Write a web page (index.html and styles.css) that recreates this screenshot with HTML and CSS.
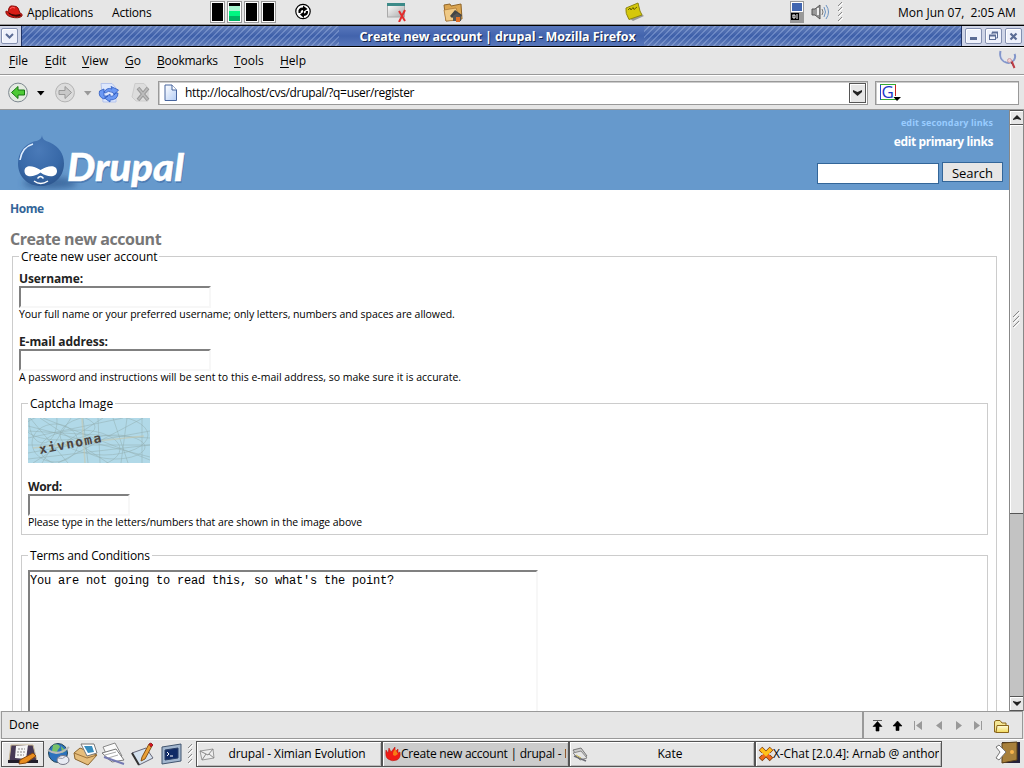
FILE: index.html
```html
<!DOCTYPE html>
<html lang="en">
<head>
<meta charset="utf-8">
<title>Create new account | drupal</title>
<link rel="stylesheet" href="styles.css">
</head>
<body>
<svg class="defs" width="0" height="0" aria-hidden="true">
  <defs>
    <pattern id="grip" width="5" height="5" patternUnits="userSpaceOnUse"><path d="M0 4L4 0" stroke="#888"/><path d="M1 5L5 1" stroke="#fff"/></pattern>
    <radialGradient id="drop" cx=".45" cy=".3" r=".8"><stop offset="0" stop-color="#4a7ab8"/><stop offset=".6" stop-color="#3869a8"/><stop offset="1" stop-color="#2b5288"/></radialGradient>
    <linearGradient id="gold" x2="0" y2="1"><stop offset="0" stop-color="#fffce0"/><stop offset="1" stop-color="#f3d956"/></linearGradient>
    <linearGradient id="silver" x2="1" y2="1"><stop offset="0" stop-color="#fff"/><stop offset="1" stop-color="#aaa"/></linearGradient>
    <linearGradient id="paper" x2="1" y2="1"><stop offset="0" stop-color="#fff"/><stop offset="1" stop-color="#b4cdf5"/></linearGradient>
    <filter id="soft" x="-50%" y="-50%" width="200%" height="200%"><feGaussianBlur stdDeviation="3"/></filter>
  </defs>
</svg>
<div class="desktop">
  <header class="panel">
    <svg class="hat" width="18" height="14" viewBox="0 0 18 14"><path d="M1 6Q0 10 6 12Q14 14 17 11Q18 9 15 8L13 3Q12 1 8 1Q5 0 4 3L3 7Z" fill="#d91c16" stroke="#8d120e"/><path d="M3 7Q8 11 15 9L16 11Q9 13 4 9Z" fill="#3a0806"/><path d="M5 4Q7 1 10 3" stroke="#f66" fill="none"/></svg>
    <span class="ls-apps">Applications</span>
    <span class="ls-apps">Actions</span>
    <div class="meters"><i></i><i class="busy"></i><i></i><i></i></div>
    <svg width="18" height="18" viewBox="0 0 18 18"><circle cx="8" cy="8.500" r="7.200" fill="#fff" stroke="#000" stroke-width="1.200"/><path d="M3.500 10Q2.500 4.500 8 4.500V2.500L12.500 6L8 9V7Q5.500 7 5.500 10ZM13 8Q13.500 12.500 9 13V15L5 11.500L9 8.500V10.500Q11 10.500 11 8Z"/></svg>
    <svg width="20" height="20" viewBox="0 0 20 20"><rect x=".5" y="2" width="17" height="13" fill="url(#silver)" stroke="#aaa"/><path d="M0 2.500H18" stroke="#3c8a88" stroke-width="3"/><path d="M12 9L18 19M18 8L12 20" stroke="#e22c2c" stroke-width="2"/></svg>
    <svg width="20" height="22" viewBox="0 0 20 22"><path d="M1 4L7 3L8 5L18 3L19 18L3 20Z" fill="#dba550" stroke="#8f6529"/><path d="M1 9L13 7L17 19L3 20Z" fill="#f0ca86" stroke="#a87432" stroke-width=".7"/><path d="M7 15L12 9L19 14L18 16L14 13L9 17Z" fill="#444"/><path d="M10 15L14 12L18 15V20H10Z" fill="#555"/><rect x="13" y="16" width="4" height="5" fill="#e07028"/></svg>
    <svg width="20" height="20" viewBox="0 0 20 20"><path d="M4 16L15 11L19 14L8 19Z" fill="#999"/><path d="M1 6L13 1L15 9L17 13L4 17.500Q0 11 1 6Z" fill="#d5c80c" stroke="#8e8612"/><path d="M3 8L5 6L6 8L8 5.500L9 7.500L12 5" stroke="#665f00" fill="none"/></svg>
    <svg width="14" height="22" viewBox="0 0 14 22"><rect width="14" height="22" fill="#999"/><rect x="1.500" y="1.500" width="11" height="9" fill="#4166b0" stroke="#fff"/><rect x="1" y="12" width="8" height="7"/><path d="M2.500 14H5V17H3V14M7 13V18" stroke="#fff" fill="none"/></svg>
    <svg width="19" height="18" viewBox="0 0 19 18"><path d="M1 6H4L9 2V16L4 12H1Z" fill="#999" stroke="#555"/><path d="M7 5V12" stroke="#eee" stroke-width="2"/><path d="M11 6Q13 9 11 12" stroke="#777" fill="none"/><path d="M13 4Q16 9 13 14M15 2Q20 9 15 16" stroke="#6a92c2" fill="none"/></svg>
    <svg class="grip-top" width="5" height="20"><rect width="5" height="20" fill="url(#grip)"/></svg>
    <span class="ls-clock">Mon Jun 07,&nbsp; 2:05 AM</span>
  </header>

  <div class="titlebar">
    <div class="tb-left"><b class="winbtn"><svg width="15" height="15" viewBox="0 0 15 15"><path d="M4 5L7.500 8.500L11 5" fill="none" stroke="#5b6c95" stroke-width="2"/></svg></b></div>
    <div class="tb-title"><span>Create new account | drupal - Mozilla Firefox</span></div>
    <div class="tb-right">
      <b class="winbtn"><svg width="15" height="15" viewBox="0 0 15 15"><path d="M4 9.500H11" stroke="#5b6c95" stroke-width="3"/></svg></b>
      <b class="winbtn"><svg width="15" height="15" viewBox="0 0 15 15"><path d="M6 5V3.500H11.500V9H10" fill="none" stroke="#5b6c95"/><rect x="3.500" y="6.500" width="6" height="4" fill="none" stroke="#5b6c95"/><path d="M3 6.500H10M6 3.500H12" stroke="#5b6c95" stroke-width="2"/></svg></b>
      <b class="winbtn"><svg width="15" height="15" viewBox="0 0 15 15"><path d="M4.500 4.500L10.500 10.500M10.500 4.500L4.500 10.500" stroke="#5b6c95" stroke-width="2.200"/></svg></b>
    </div>
  </div>

  <nav class="menubar">
    <span><u>F</u>ile</span><span><u>E</u>dit</span><span><u>V</u>iew</span><span><u>G</u>o</span><span class="ls-book"><u>B</u>ookmarks</span><span><u>T</u>ools</span><span><u>H</u>elp</span>
    <svg class="throbber" width="20" height="20" viewBox="0 0 20 20"><path d="M2.500 1Q1 8 6 11.500Q12 15 16 10Q18 7 16.500 4" fill="none" stroke="#8295ca" stroke-width="2"/><path d="M4 4Q3 9 7 11" stroke="#dce3f3" fill="none"/><path d="M11 10L14 12L16.500 18" stroke="#bd3d46" stroke-width="2"/><circle cx="11.500" cy="10.500" r="2" fill="#f5d0d0" stroke="#c9a0a8"/></svg>
  </nav>

  <div class="toolbar">
    <svg class="nav-icons" width="150" height="26" viewBox="4 79 150 26">
      <circle cx="18" cy="91.500" r="9.400" fill="#e4ebe1" stroke="#7e8790"/><path d="M11.500 91.500L18 85.500V89H24.500V94H18V97.500Z" fill="#4ecb35" stroke="#167512"/>
      <path d="M37 90H44.500L40.750 94.500Z"/>
      <circle cx="65" cy="91.500" r="9.400" fill="#dcdcdc" stroke="#b3b3b3"/><path d="M71.500 91.500L65 85.500V89.500H59V93.500H65V97.500Z" fill="#c8c8c8" stroke="#999"/>
      <path d="M84 90H91.500L87.750 94.500Z" fill="#999"/>
      <path d="M101 82.500H112L116 87V101H103Z" fill="#dde7fd" stroke="#b5c4ec"/><path d="M104 91Q107 86 112 88L111 85.500L118.500 89L114 94L113 91.500Q108 89 105 92ZM118 92Q118 99 110 99V101L104.500 97L110 93V95Q114 96 115 92ZM99.500 90L104 88L104 95L108 95L104 98Q98 96 99.500 90Z" fill="#6c99f3" stroke="#2d5bc0" stroke-width=".8"/>
      <path d="M135 82.500H144L148 87V100H136L132 96Z" fill="#ddd" stroke="#ccc"/><path d="M138 87L148 99M148 87L138 99" stroke="#999" stroke-width="3.600"/><path d="M138.500 87.500L147.500 98.500M147.500 87.500L138.500 98.500" stroke="#bcbcbc" stroke-width="1.800"/>
    </svg>
    <div class="urlbar">
      <svg width="14" height="18" viewBox="0 0 14 18"><path d="M1 1H8L12.500 6V16.500H1Z" fill="url(#paper)" stroke="#47659e"/><path d="M8 1V6H12.500" fill="#fff" stroke="#47659e"/></svg>
      <span class="ls-url">http://localhost/cvs/drupal/?q=user/register</span>
      <b class="drop"><svg width="9" height="6" viewBox="0 0 9 6"><path d="M0 0L4.500 2L9 0V2L4.500 6L0 2Z" fill="#222"/></svg></b>
    </div>
    <div class="searchbar"><svg width="24" height="20" viewBox="0 0 24 20"><rect x="1.500" y="1.500" width="15" height="15" fill="#fff"/><path d="M1 1.500H17M1 16.500H17" stroke="#3a3"/><path d="M1.500 2V17" stroke="#24c"/><path d="M16.500 2V13" stroke="#c22"/><text x="2.500" y="15" class="g">G</text><path d="M14.500 14H22L18 18Z"/></svg></div>
  </div>

  <div class="viewport">
    <main class="page">
      <div class="banner">
        <svg class="logo" width="200" height="80" viewBox="0 110 200 80">
          <ellipse cx="50" cy="183" rx="27" ry="6" fill="#264f85" opacity=".6" filter="url(#soft)"/>
          <path d="M42 135C42.500 140 45 140.500 50 142.500C59 146.500 64 154 64 163.500C64 177 54 186 41 186C28 186 18 177 18 163.500C18 153 24 145 33 141.800C38 140.500 41.500 140 42 135Z" fill="url(#drop)"/>
          <path d="M20 160Q22 147 33 144" fill="none" stroke="#dfeeff" stroke-width="1.600"/>
          <path d="M24.500 171C24.500 164.500 33 165 40.500 170C48 165 57 164.500 57 171C57 177.500 48 178 40.500 172.500C33 178 24.500 177.500 24.500 171Z" fill="#fff"/>
          <path d="M37.500 178.500Q40.500 174.500 43.500 178.500M34 181Q40.500 186 48 181" fill="none" stroke="#fff" stroke-width="1.400"/>
          <text x="68" y="182.500" textLength="117" lengthAdjust="spacingAndGlyphs" class="wordmark shade">Drupal</text>
          <text x="67" y="181" textLength="117" lengthAdjust="spacingAndGlyphs" class="wordmark">Drupal</text>
        </svg>
        <div class="links">
          <a class="secondary">edit secondary links</a>
          <a class="primary">edit primary links</a>
          <div class="find"><i class="find-field"></i><b class="find-btn">Search</b></div>
        </div>
      </div>
      <a class="crumb">Home</a>
      <h1>Create new account</h1>
      <section class="box outer">
        <span class="legend ls-legend">Create new user account</span>
        <div class="item"><label>Username:</label><i class="field"></i><p class="ls-d1">Your full name or your preferred username; only letters, numbers and spaces are allowed.</p></div>
        <div class="item"><label>E-mail address:</label><i class="field"></i><p>A password and instructions will be sent to this e-mail address, so make sure it is accurate.</p></div>
        <section class="box captcha">
          <span class="legend">Captcha Image</span>
          <svg class="captcha-img" width="122" height="45" viewBox="0 0 122 45">
            <rect width="122" height="45" fill="#b1d9e8"/>
            <g fill="none" stroke="#93aeb0" stroke-width=".5">
              <path d="M0 8L122 39M0 35L122 13M12 0L80 45M30 45L115 0M0 20L95 0M2 0L40 45M55 0L60 45M70 0L72 45M85 0L100 45M0 27H122M0 41L122 27M43 0L14 45M93 45L99 0M114 0V45M0 13L122 20M15 0L122 42M5 45L75 0"/>
              <ellipse cx="27" cy="25" rx="23" ry="19"/><ellipse cx="52" cy="31" rx="40" ry="19"/><ellipse cx="76" cy="17" rx="44" ry="20"/><ellipse cx="32" cy="9" rx="35" ry="13"/><ellipse cx="87" cy="29" rx="30" ry="12"/><ellipse cx="15" cy="3" rx="14" ry="22"/>
            </g>
            <path d="M54 0L57 45M5 30L116 18" stroke="#c6c7ae" stroke-width="1.500" opacity=".6"/>
            <text x="12" y="36" transform="rotate(-11 12 36)" textLength="63" class="scribble">xivnoma</text>
          </svg>
          <label class="ls-word">Word:</label><i class="field short"></i><p class="ls-d3">Please type in the letters/numbers that are shown in the image above</p>
        </section>
        <section class="box terms">
          <span class="legend ls-terms">Terms and Conditions</span>
          <div class="textarea">You are not going to read this, so what's the point?</div>
        </section>
      </section>
    </main>
    <aside class="scroll">
      <b class="sbtn"><svg width="8" height="5" viewBox="0 0 8 5"><path d="M4 0L8 4V5L4 4L0 5V4Z" fill="#222"/></svg></b>
      <b class="thumb"><svg width="7" height="17" viewBox="0 0 7 17"><path d="M0 6L6 0M0 11L6 5M0 16L6 10" stroke="#888"/><path d="M1 7L7 1M1 12L7 6M1 17L7 11" stroke="#fff"/></svg></b>
      <b class="sbtn end"><svg width="8" height="5" viewBox="0 0 8 5"><path d="M4 5L8 1V0L4 1L0 0V1Z" fill="#222"/></svg></b>
    </aside>
  </div>

  <div class="status">
    <span>Done</span>
    <svg width="158" height="26" viewBox="864 712 158 26">
      <path d="M873 720.500H882M877.500 721.500L882 726.500H879V731H876V726.500H873ZM897.500 721L902 726H899V730.500H896V726H893Z" stroke="#000" stroke-width=".6"/>
      <g fill="#999"><path d="M914 721H915V730H914ZM922 721V730L916 725.500ZM942 721V730L936 725.500ZM956 721V730L962 725.500ZM974 721V730L980 725.500ZM981 721H982V730H981Z"/></g>
      <path d="M994.500 732V721.500L996 720.500H1000L1002 723H1006V732Z" fill="#f5e796" stroke="#8a6519"/><path d="M997 725.500H1008.500V732.500H996Z" fill="url(#gold)" stroke="#8a6519"/>
    </svg>
  </div>

  <footer class="taskbar">
    <b class="launcher"><svg width="30" height="22" viewBox="0 0 30 22"><path d="M3 2H25L29 18H1Z" fill="#463955" stroke="#c9b894"/><path d="M0 17H30V20H0Z" fill="#211d29"/><path d="M8 3L20 2L18 16L7 15Z" fill="#f6f6f6"/><path d="M10 6H17M9 9H17M9 12H16" stroke="#888" stroke-dasharray="2 1"/><path d="M12 17L25 10L28 13L18 20L11 21Z" fill="#e88d1f" stroke="#89490e"/></svg></b>
    <svg class="launch-icons" width="150" height="26" viewBox="45 741 150 26">
      <circle cx="58" cy="753" r="9.500" fill="#2d72bd" stroke="#245"/><path d="M53 745Q59 743 60 747Q58 749 56 754L52 751ZM61 746L66 751L62 753Z" fill="#78c268"/><path d="M48 750Q58 757 69 747" stroke="#bbb" stroke-width="2" fill="none"/><ellipse cx="63" cy="760" rx="6" ry="4.500" fill="#e8ebf3" stroke="#778"/><path d="M58 758Q63 760 66 756" stroke="#99a" fill="none"/>
      <path d="M74 753L80 748L97 755L88 765L75 759Z" fill="#e5bd7b" stroke="#8b662f"/><path d="M81 744H94L97 753L87 756Z" fill="#fff" stroke="#777"/><path d="M84 746H92L94 752L88 753Z" fill="#378dbf"/><path d="M74 753L87 758L97 755" fill="none" stroke="#9d733b"/>
      <path d="M103 747L115 743L122 756L109 760Z" fill="#fafafa" stroke="#888"/><path d="M102 753L116 749L124 760L112 762Z" fill="#fff" stroke="#777"/><path d="M105 755L116 752M108 758L118 755" stroke="#aaa"/><path d="M104 757L124 764" stroke="#7479b3" stroke-width="2"/>
      <path d="M132 753L146 748L153 758L139 765Z" fill="#d5e2ef" stroke="#667"/><path d="M132 753L139 765" stroke="#333" stroke-width="2"/><path d="M142 757L149 744L152 746L145 759L141 761Z" fill="#e9a138" stroke="#865216"/><path d="M149 744L151 743L153 745L151 747Z" fill="#d12" stroke="#922"/>
      <path d="M162 747L181 744V761L162 764Z" fill="#a2b6ce" stroke="#41556f"/><path d="M165 750L178 748V758L165 760Z" fill="#102b66" stroke="#283e67"/><path d="M167 752L169 754L167 756M170 756H173" stroke="#fff" fill="none"/>
      <path d="M188 748L192 744M188 753L192 749M188 758L192 754M188 763L192 759" stroke="#888"/><path d="M189 749L193 745M189 754L193 750M189 759L193 755M189 764L193 760" stroke="#fff"/>
    </svg>
    <div class="tasks">
      <b class="task"><svg width="16" height="16" viewBox="0 0 16 16"><path d="M1 5L14 3L15 12L3 14Z" fill="#eee" stroke="#999"/><path d="M1 5L9 9L14 3M3 14L7 8M15 12L10 8" stroke="#888" fill="none"/></svg><span class="ls-t1">drupal - Ximian Evolution</span></b>
      <b class="task active"><svg width="16" height="16" viewBox="0 0 16 16"><path d="M1 4L3 7L4 2L6 6L10 1L10 6L13 3L13 7L15 6Q16 12 12 14Q7 16 3 13Q0 11 1 4Z" fill="#f01b16" stroke="#b60f0a" stroke-width=".5"/><path d="M8 9Q8 5 10 3L13 8L10 10Z" fill="#f87b16"/></svg><span class="ls-t2">Create new account | drupal - Mozilla</span></b>
      <b class="task"><svg width="16" height="16" viewBox="0 0 16 16"><path d="M1 4L9 2L15 10L7 13Z" fill="#ccc" stroke="#777"/><path d="M1 7L9 5L15 12L8 14Z" fill="#e4e4e4" stroke="#888"/><path d="M2 10L14 15" stroke="#6c6c75" stroke-width="1.500"/><path d="M4 9L9 12" stroke="#c8b94c"/></svg><span>Kate</span></b>
      <b class="task"><svg width="16" height="16" viewBox="0 0 16 16"><path d="M2.500 2.500L13.500 13.500M13.500 2.500L2.500 13.500" stroke="#7d3c08" stroke-width="5"/><path d="M3 3L13 13M13 3L3 13" stroke="#f16a1d" stroke-width="3.500"/><path d="M3 3L8 8L13 3" stroke="#ffc31b" stroke-width="3.500" fill="none"/><path d="M1 8H5M11 8H15" stroke="#ddd" stroke-width="1.500"/></svg><span class="ls-t4">X-Chat [2.0.4]: Arnab @ anthon</span></b>
    </div>
    <svg class="door" width="26" height="24" viewBox="0 0 26 24"><path d="M7 1H25V22H8Z" fill="#25213a"/><path d="M7 2L22 1V19L7 22Z" fill="#a8803b" stroke="#5a4119"/><circle cx="17" cy="11" r="2" fill="#f7b34b"/><path d="M1 6L4 4L11 11L4 19L1 17L5 11Z" fill="#fff" stroke="#777"/></svg>
  </footer>
</div>
</body>
</html>
```
FILE: styles.css
```css
* { box-sizing: border-box; }
body { margin: 0; font-family: "Open Sans", "Noto Sans", sans-serif; font-size: 12px; line-height: 16px; color: #000; overflow: hidden; }
b { font-weight: normal; }
i { font-style: normal; }
svg { display: block; flex: none; }
.defs { position: absolute; }
.desktop { width: 1024px; height: 768px; display: grid; grid-template-rows: 26px 21px 28px 35px 601px 28px 29px; background: #e6e6e6; white-space: nowrap; overflow: hidden; }

.panel { display: grid; grid-template-columns: 27px 85px 98px 85px 92px 56px 182px 165px 21px 27px 60px 1fr; align-items: center; padding-bottom: 2px; border-bottom: 1px solid #000; box-shadow: inset 0 -1px #999; }
.panel span { padding-top: 2px; }
.hat { margin-left: 5px; }
.ls-apps { letter-spacing: -.2px; }
.ls-clock { letter-spacing: 0; }
.meters { display: flex; gap: 2px; }
.meters i { width: 15px; height: 22px; border: 1px solid #999; outline: 1px solid #fff; outline-offset: -2px; background: #000; }
.meters .busy { background: linear-gradient(#000 4px, #a5f5ce 4px 9px, #00f582 9px 14px, #00b264 14px); }

.titlebar { display: grid; grid-template-columns: 22px 1fr 63px; border-bottom: 1px solid #000; }
.tb-left, .tb-right { display: flex; align-items: center; background: #cfd5e7; }
.tb-left { padding-left: 1px; border-right: 1px solid #223567; }
.tb-right { gap: 3px; padding-left: 3px; border-left: 1px solid #223567; }
.winbtn { width: 17px; height: 16px; border: 1px solid #8490b0; border-radius: 2px; background: #eef1fb; box-shadow: inset 1px 1px #fff; }
.tb-title { display: flex; align-items: center; justify-content: center; background: linear-gradient(rgba(255,255,255,.2), rgba(255,255,255,0) 50%, rgba(255,255,255,.2)), repeating-linear-gradient(135deg, #3d5fa9 0 2px, #6280c0 2px 2.830px, #3d5fa9 2.830px 4.243px); }
.tb-title span { padding: 2px 8px 0 20px; background: linear-gradient(#5877bb, #4263ac 50%, #5877bb); font-weight: 700; font-size: 12.500px; color: #fff; text-shadow: 1px 1px #16274e; letter-spacing: -.1px; line-height: 18px; }

.menubar { display: grid; grid-template-columns: 36px 37px 43px 32px 77px 46px 718px 1fr; align-items: center; padding-left: 9px; border-top: 1px solid #fff; border-bottom: 1px solid #999; }
.menubar u { text-underline-offset: 2px; }
.ls-book { letter-spacing: -.27px; }
.throbber { margin-top: -2px; }

.toolbar { display: flex; align-items: center; padding-left: 4px; border-top: 1px solid #fff; border-bottom: 1px solid #999; }
.urlbar, .searchbar { display: flex; align-items: center; height: 24px; border: 1px solid #999; background: #fff; box-shadow: inset 1px 1px #ccc; }
.urlbar { width: 710px; margin-left: 4px; padding: 0 1px 0 5px; }
.urlbar span { margin-left: 7px; flex: 1; line-height: 20px; letter-spacing: -.34px; }
.drop { display: flex; align-items: center; justify-content: center; width: 17px; height: 20px; border: 1px solid #555; background: #e6e6e6; box-shadow: inset 1px 1px #fff; }
.searchbar { width: 144px; margin-left: 7px; padding-left: 3px; }
.g { font: 17px "Open Sans", sans-serif; fill: #1a35c8; }

.viewport { display: grid; grid-template-columns: 1009px 15px; min-height: 0; overflow: hidden; }
.page { background: #fff; min-width: 0; height: 601px; overflow: hidden; }
.banner { display: flex; justify-content: space-between; height: 80px; background: #69c; }
.wordmark { font: italic 900 37px Lato, sans-serif; fill: #fff; stroke: #fff; stroke-width: .4px; }
.shade { fill: #3c6ba6; stroke: none; opacity: .6; }
.links { display: flex; flex-direction: column; align-items: flex-end; padding: 5px 6px 0 0; font-weight: 700; }
.links a { margin-right: 10px; }
.secondary { color: #9cf; font-size: 9px; letter-spacing: .1px; }
.primary { color: #fff; margin-top: 3px; letter-spacing: -.4px; }
.find { display: flex; gap: 3px; margin-top: 12px; font-weight: 400; }
.find-field { width: 122px; height: 21px; margin-top: 1px; background: #fff; border: 1px solid #369; }
.find-btn { width: 61px; height: 20px; border: 1px solid #369; background: #e6e6e6; font-size: 13px; line-height: 20px; text-align: center; }
.crumb { display: block; margin: 11px 0 0 10px; color: #369; font-weight: 700; letter-spacing: -.45px; }
h1 { margin: 13px 0 0 10px; height: 26px; font-size: 16px; line-height: 18px; color: #777; letter-spacing: -.43px; }
.box { border: 1px solid #ccc; }
.legend { display: block; width: max-content; height: 16px; margin-top: -8px; padding: 0 2px; background: #fff; }
.ls-legend { letter-spacing: -.1px; }
.ls-terms { letter-spacing: -.15px; }
.outer { width: 985px; height: 600px; margin: 0 0 0 12px; padding: 0 8px 0 6px; }
.item { height: 63px; }
.outer > .legend { margin-bottom: 6px; }
label { display: block; height: 15px; color: #222; font-weight: 700; line-height: 16px; letter-spacing: -.1px; }
.ls-word { letter-spacing: -.35px; }
.field { display: block; width: 192px; height: 22px; border: 2px solid; border-color: #808080 #f7f7f7 #f7f7f7 #808080; }
p { margin: -1px 0 0; font-size: 10.500px; line-height: 14px; }
.ls-d1 { letter-spacing: -.06px; }
.ls-d3 { letter-spacing: -.09px; }
.captcha, .terms { width: 967px; margin-left: 2px; padding-left: 6px; }
.captcha { height: 132px; margin-top: 6px; }
.captcha-img { margin: 6px 0 16px; }
.short { width: 102px; }
.terms { height: 300px; margin-top: 20px; }
.textarea { width: 510px; height: 250px; margin-top: 6px; padding-top: 1px; border: 2px solid; border-color: #808080 #f7f7f7 #f7f7f7 #808080; font: 12px/16px "Liberation Mono", monospace; letter-spacing: -.2px; }
.scribble { font: bold 13px "DejaVu Sans Mono", monospace; fill: #4b4440; }

.scroll { display: flex; flex-direction: column; background: #c3c3c3; border-left: 1px solid #888; border-right: 1px solid #888; }
.sbtn, .thumb { display: flex; align-items: center; justify-content: center; background: #e6e6e6; border: 1px solid #555; border-width: 1px 0; box-shadow: inset 1px 1px #fff; }
.sbtn { height: 15px; }
.thumb { height: 389px; border-top: 0; }
.end { margin-top: auto; }

.status { display: grid; grid-template-columns: 862px 1fr; margin: 0 1px; border: 1px solid #999; align-items: center; }
.status span { padding-left: 7px; border-right: 2px solid #999; line-height: 26px; }

.taskbar { display: flex; align-items: stretch; padding: 1px 3px 1px 1px; border-top: 1px solid #fff; }
.launcher { width: 43px; padding: 1px 6px; border: 1px solid #555; box-shadow: inset 1px 1px #fff; }
.launch-icons { margin-left: 1px; }
.tasks { display: grid; grid-template-columns: 186px 187px 186px 187px; margin-left: 1px; }
.task { display: flex; align-items: center; padding-left: 2px; border: 1px solid #555; box-shadow: inset 1px 1px #fff, inset -1px -1px #bbb; overflow: hidden; }
.task span { flex: 1; text-align: center; overflow: hidden; margin-right: 2px; }
.active { background: #ccc; }
.active span, .task:last-child span { text-align: left; }
.ls-t1 { letter-spacing: -.12px; }
.task .ls-t2 { letter-spacing: -.24px; }
.task .ls-t4 { margin-left: -1px; letter-spacing: -.1px; }
.door { margin-left: auto; }
```
